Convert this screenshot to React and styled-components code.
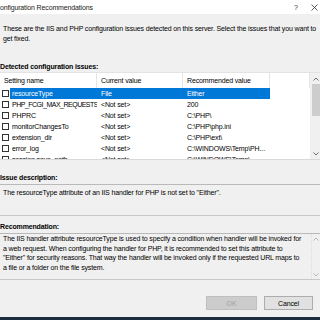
import React from 'react';
import styled, { createGlobalStyle } from 'styled-components';

const GlobalStyle = createGlobalStyle`
  html, body {
    margin: 0;
    padding: 0;
    width: 320px;
    height: 320px;
    overflow: hidden;
    background: #f0f0f0;
  }
  * { box-sizing: border-box; }
`;

const Dialog = styled.div`
  width: 320px;
  height: 320px;
  display: flex;
  flex-direction: column;
  background: #f0f0f0;
  font-family: "Liberation Sans", Arial, sans-serif;
  font-size: 7px;
  letter-spacing: -0.14px;
  color: #000;
  overflow: hidden;
`;

const TitleBar = styled.div`
  height: 14px;
  flex: none;
  display: flex;
  align-items: center;
  background: #fff;
  color: #222;
`;

const TitleText = styled.div`
  flex: 1;
  text-indent: -5px;
  white-space: nowrap;
`;

const TitleButton = styled.div`
  width: ${({ w }) => w}px;
  display: flex;
  justify-content: center;
  align-items: center;
  color: #333;
`;

const Intro = styled.p`
  margin: 10px 0 0 3px;
  line-height: 9.5px;
  width: 316px;
`;

const Label = styled.div`
  margin-top: ${({ top }) => top}px;
  line-height: 10px;
  font-weight: bold;
  white-space: nowrap;
`;

const List = styled.div`
  height: 88px;
  flex: none;
  display: flex;
  background: #fff;
  border-top: 1px solid #e3e3e3;
  border-bottom: 1px solid #d9d9d9;
  overflow: hidden;
`;

const Grid = styled.div`
  flex: 1;
  display: flex;
  flex-direction: column;
`;

const Row = styled.div`
  display: grid;
  grid-template-columns: 10px 87px 86px 87px 40px;
  height: ${({ h }) => h || 11}px;
  align-items: center;
  flex: none;
`;

const HeadCell = styled.div`
  height: 100%;
  display: flex;
  align-items: center;
  padding-left: 4px;
  border-right: 1px solid #e5e5e5;
  white-space: nowrap;
  grid-column: ${({ span }) => span || 'auto'};
`;

const Cell = styled.div`
  height: 100%;
  display: flex;
  align-items: center;
  padding-left: ${({ pad }) => pad ?? 4}px;
  white-space: nowrap;
  overflow: hidden;
  letter-spacing: ${({ tight }) => (tight ? '-0.5px' : 'inherit')};
  background: ${({ selected }) => (selected ? '#0078d7' : 'transparent')};
  color: ${({ selected }) => (selected ? '#fff' : '#000')};
`;

const Check = styled.span`
  display: block;
  width: 7px;
  height: 7px;
  margin-left: 2px;
  border: 1px solid #333;
  background: #fff;
`;

const ScrollBar = styled.div`
  width: 10px;
  flex: none;
  display: flex;
  flex-direction: column;
  align-items: center;
  background: #f0f0f0;
  padding-left: 1px;
`;

const Arrow = styled.div`
  height: 11px;
  display: flex;
  align-items: center;
  justify-content: center;
  flex: none;
`;

const Thumb = styled.div`
  width: 8px;
  height: 32px;
  background: #cdcdcd;
  flex: none;
`;

const Track = styled.div`
  flex: 1;
`;

const Box = styled.div`
  height: ${({ h }) => h}px;
  flex: none;
  display: flex;
  margin-top: 1px;
  border-top: 1px solid #b9b9b9;
  border-bottom: 1px solid #c8c8c8;
`;

const BoxText = styled.div`
  flex: 1;
  padding: ${({ pt }) => pt}px 0 0 3px;
  line-height: ${({ lh }) => lh}px;
  white-space: nowrap;
  overflow: hidden;
`;

const BoxScroll = styled.div`
  width: 9px;
  flex: none;
  border-left: 1px dotted #dcdcdc;
  display: flex;
  flex-direction: column;
  justify-content: space-between;
  align-items: center;
  padding: 3px 0 2px;
`;

const Footer = styled.div`
  display: flex;
  justify-content: flex-end;
  gap: 7px;
  margin-top: 16px;
  padding-right: 7px;
`;

const Button = styled.div`
  width: ${({ w }) => w}px;
  height: 14px;
  display: flex;
  align-items: center;
  justify-content: center;
  background: ${({ disabled }) => (disabled ? '#cccccc' : '#e1e1e1')};
  border: 1px solid ${({ disabled }) => (disabled ? '#bfbfbf' : '#adadad')};
  color: ${({ disabled }) => (disabled ? '#a0a0a0' : '#000')};
`;

const Taskbar = styled.div`
  margin-top: auto;
  height: 3px;
  background: #1d2b3f;
`;

const Chevron = ({ up, color = '#606060' }) => (
  <svg width="6" height="4" viewBox="0 0 6 4">
    <path
      d={up ? 'M0.5 3.5 L3 1 L5.5 3.5' : 'M0.5 0.5 L3 3 L5.5 0.5'}
      fill="none"
      stroke={color}
      strokeWidth="0.9"
    />
  </svg>
);

const rows = [
  ['resourceType', 'File', 'Either'],
  ['PHP_FCGI_MAX_REQUESTS', '<Not set>', '200'],
  ['PHPRC', '<Not set>', 'C:\\PHP\\'],
  ['monitorChangesTo', '<Not set>', 'C:\\PHP\\php.ini'],
  ['extension_dir', '<Not set>', 'C:\\PHP\\ext\\'],
  ['error_log', '<Not set>', 'C:\\WINDOWS\\Temp\\PH...'],
  ['session.save_path', '<Not set>', 'C:\\WINDOWS\\Temp\\'],
];

const recommendation = [
  'The IIS handler attribute resourceType is used to specify a condition when handler will be invoked for',
  'a web request. When configuring the handler for PHP, it is recommended to set this attribute to',
  '"Either" for security reasons. That way the handler will be invoked only if the requested URL maps to',
  'a file or a folder on the file system.',
];

export default function App() {
  return (
    <>
      <GlobalStyle />
      <Dialog>
        <TitleBar>
          <TitleText>Configuration Recommendations</TitleText>
          <TitleButton w={24}>?</TitleButton>
          <TitleButton w={12}>
            <svg width="7" height="7" viewBox="0 0 7 7">
              <path d="M0.5 0.5 L6.5 6.5 M6.5 0.5 L0.5 6.5" stroke="#333" strokeWidth="0.8" />
            </svg>
          </TitleButton>
        </TitleBar>

        <Intro>
          These are the IIS and PHP configuration issues detected on this server. Select the issues that you want to get fixed.
        </Intro>

        <Label top={19}>Detected configuration issues:</Label>

        <List>
          <Grid>
            <Row h={15}>
              <HeadCell span="1 / 3">Setting name</HeadCell>
              <HeadCell>Current value</HeadCell>
              <HeadCell>Recommended value</HeadCell>
              <HeadCell />
            </Row>
            {rows.map(([name, current, recommended], i) => (
              <Row key={name}>
                <Cell pad={0}><Check /></Cell>
                <Cell selected={i === 0} pad={2} tight={name.length > 18}>{name}</Cell>
                <Cell selected={i === 0}>{current}</Cell>
                <Cell selected={i === 0}>{recommended}</Cell>
                <Cell />
              </Row>
            ))}
          </Grid>
          <ScrollBar>
            <Arrow><Chevron up /></Arrow>
            <Thumb />
            <Track />
            <Arrow><Chevron /></Arrow>
          </ScrollBar>
        </List>

        <Label top={13}>Issue description:</Label>
        <Box h={32}>
          <BoxText pt={3} lh={10}>
            The resourceType attribute of an IIS handler for PHP is not set to "Either".
          </BoxText>
        </Box>

        <Label top={6}>Recommendation:</Label>
        <Box h={47}>
          <BoxText pt={0} lh={9.6}>
            {recommendation.map((line) => (
              <div key={line}>{line}</div>
            ))}
          </BoxText>
          <BoxScroll>
            <Chevron up color="#b0b0b0" />
            <Chevron color="#b0b0b0" />
          </BoxScroll>
        </Box>

        <Footer>
          <Button w={51} disabled>OK</Button>
          <Button w={49}>Cancel</Button>
        </Footer>

        <Taskbar />
      </Dialog>
    </>
  );
}
